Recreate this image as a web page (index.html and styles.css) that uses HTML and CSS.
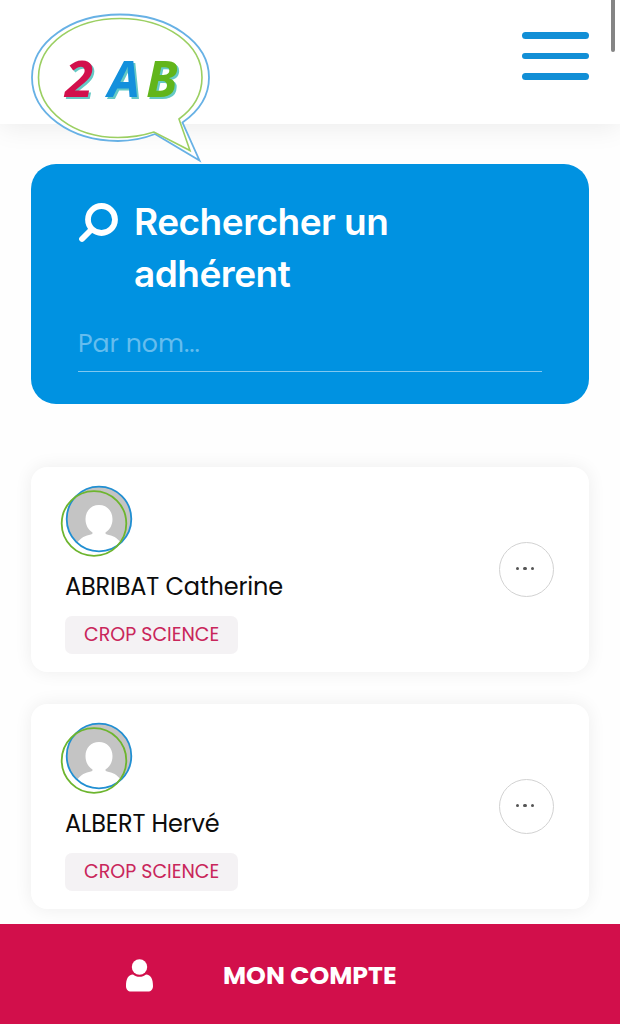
FILE: index.html
```
<!DOCTYPE html>
<html lang="fr">
<head>
  <meta charset="UTF-8">
  <meta name="viewport" content="width=device-width, initial-scale=1.0">
  <title>2 AB - Rechercher un adhérent</title>
  <link rel="stylesheet" href="styles.css">
</head>
<body>
  <header class="header">
    <a class="logo" href="#" aria-label="2 AB">
      <svg width="182" height="152" viewBox="29 11 182 152">
        <path class="bubble-outer" d="M155 134C145 138 132 141 118 141C70 141 32 113 32 77.500C32 42 71 14.500 120 14.500C169 14.500 209 42 209 77.500C209 96 199 111 182.500 122.500L199.500 160.500Z"/>
        <path class="bubble-inner" d="M154 132C143 135.500 131 137.500 118 137.500C74 137.500 38.500 111 38.500 77.500C38.500 44 74 18.500 120 18.500C166 18.500 202 44 202 77.500C202 94 194 108 179 119L190 150.500Z"/>
        <g class="logo-text">
          <text class="red" x="65" y="97">2</text>
          <text class="blue" x="108" y="97">A</text>
          <text class="green" x="146" y="97">B</text>
        </g>
      </svg>
    </a>
    <button class="burger" aria-label="Menu">
      <span></span>
      <span></span>
      <span></span>
    </button>
    <div class="scroll-thumb"></div>
  </header>

  <main class="content">
    <section class="search">
      <div class="search-head">
        <svg class="search-icon" width="41" height="42" viewBox="0 0 41 42">
          <circle cx="23.500" cy="16.500" r="13.500"/>
          <path d="M13.500 26.500L4 36"/>
        </svg>
        <h1>Rechercher un<br>adhérent</h1>
      </div>
      <input class="search-input" type="text" placeholder="Par nom...">
    </section>

    <ul class="members">
      <li class="member">
        <div class="member-info">
          <svg class="avatar" width="74" height="74" viewBox="0 0 74 74">
            <clipPath id="clip1"><circle cx="39" cy="35" r="32.500"/></clipPath>
            <g clip-path="url(#clip1)">
              <rect class="avatar-bg" width="74" height="74"/>
              <path class="avatar-shape" d="M39 21C31 21 25.500 27 25.500 35C25.500 41 28 45.500 32.500 48.500C33 50.500 30 50.500 27 51.500C22 53 17 57 15 64V74H63V64C61 57 56 53 51 51.500C48 50.500 45 50.500 45.500 48.500C50 45.500 52.500 41 52.500 35C52.500 27 47 21 39 21Z"/>
            </g>
            <circle class="ring-blue" cx="39" cy="35" r="32.300"/>
            <circle class="ring-green" cx="34" cy="39.500" r="32.300"/>
          </svg>
          <h2>ABRIBAT Catherine</h2>
          <span class="tag">CROP SCIENCE</span>
        </div>
        <button class="more" aria-label="Plus"><i></i><i></i><i></i></button>
      </li>
      <li class="member">
        <div class="member-info">
          <svg class="avatar" width="74" height="74" viewBox="0 0 74 74">
            <clipPath id="clip2"><circle cx="39" cy="35" r="32.500"/></clipPath>
            <g clip-path="url(#clip2)">
              <rect class="avatar-bg" width="74" height="74"/>
              <path class="avatar-shape" d="M39 21C31 21 25.500 27 25.500 35C25.500 41 28 45.500 32.500 48.500C33 50.500 30 50.500 27 51.500C22 53 17 57 15 64V74H63V64C61 57 56 53 51 51.500C48 50.500 45 50.500 45.500 48.500C50 45.500 52.500 41 52.500 35C52.500 27 47 21 39 21Z"/>
            </g>
            <circle class="ring-blue" cx="39" cy="35" r="32.300"/>
            <circle class="ring-green" cx="34" cy="39.500" r="32.300"/>
          </svg>
          <h2>ALBERT Hervé</h2>
          <span class="tag">CROP SCIENCE</span>
        </div>
        <button class="more" aria-label="Plus"><i></i><i></i><i></i></button>
      </li>
    </ul>
  </main>

  <a class="account" href="#">
    <svg width="27" height="33" viewBox="0 0 27 33">
      <circle cx="13.500" cy="8" r="7.700"/>
      <path d="M7 15.500C9 17 11 17.800 13.500 17.800C16 17.800 18 17 20 15.500C25 16 27 20 27 27C27 30.500 25 32.500 22 32.500H5C2 32.500 0 30.500 0 27C0 20 2 16 7 15.500Z"/>
    </svg>
    <span>MON COMPTE</span>
  </a>
</body>
</html>
```

FILE: styles.css
```
* {
  box-sizing: border-box;
}
body {
  margin: 0;
  height: 1024px;
  overflow: hidden;
  display: flex;
  flex-direction: column;
  background: #fefefe;
  font-family: Poppins, Inter, sans-serif;
}
button {
  padding: 0;
  border: 0;
  background: none;
}

/* header */
.header {
  position: relative;
  z-index: 1;
  flex: none;
  display: flex;
  justify-content: space-between;
  align-items: flex-start;
  height: 124px;
  padding: 11px 31px 0 29px;
  background: #fff;
  box-shadow: 0 3px 26px rgba(0, 0, 0, 0.08);
}
.logo svg {
  display: block;
}
.bubble-outer,
.bubble-inner {
  fill: #fff;
  stroke: #67b1e5;
  stroke-width: 1.8;
}
.bubble-inner {
  stroke: #9bcf62;
  stroke-width: 1.6;
}
.logo-text {
  font: italic 700 51px "Open Sans", sans-serif;
  filter: drop-shadow(2px 2px 0 #65c9c5);
}
.red {
  fill: #d2104c;
}
.blue {
  fill: #1390dc;
}
.green {
  fill: #62b51b;
}
.burger {
  display: flex;
  flex-direction: column;
  gap: 14px;
  margin-top: 21px;
}
.burger span {
  width: 67px;
  height: 6.500px;
  border-radius: 4px;
  background: #128fd6;
}
.scroll-thumb {
  position: absolute;
  top: 0;
  right: 5px;
  width: 4px;
  height: 52px;
  border-radius: 0 0 3px 3px;
  background: #858585;
}

/* search */
.content {
  flex: 1;
  min-height: 0;
  padding: 40px 31px 0;
}
.search {
  height: 240px;
  padding: 32px 47px 0;
  border-radius: 25px;
  background: #0092e1;
}
.search-head {
  display: flex;
  gap: 15px;
}
.search-icon {
  flex: none;
  margin-top: 7px;
  fill: none;
  stroke: #fff;
  stroke-width: 5.800;
  stroke-linecap: round;
}
.search h1 {
  margin: 0;
  color: #fff;
  font: 600 37px/52px Inter, sans-serif;
  letter-spacing: -0.5px;
}
.search-input {
  display: block;
  width: 464px;
  height: 56px;
  margin-top: 16px;
  padding: 0;
  border: 0;
  border-bottom: 1px solid #80c8f0;
  background: none;
  font: 400 25.200px Poppins, Inter, sans-serif;
}
.search-input::placeholder {
  color: #65bdee;
  opacity: 1;
}

/* members */
.members {
  display: flex;
  flex-direction: column;
  gap: 32px;
  margin: 63px 0 0;
  padding: 0;
  list-style: none;
}
.member {
  display: flex;
  justify-content: space-between;
  align-items: center;
  height: 205px;
  padding: 0 35px 0 34px;
  border-radius: 16px;
  background: #fff;
  box-shadow: 0 0 18px rgba(0, 0, 0, 0.07);
}
.member-info {
  display: flex;
  flex-direction: column;
  align-items: flex-start;
  padding-bottom: 1px;
}
.avatar {
  margin: -1px 0 0 -5px;
}
.avatar-bg {
  fill: #c4c4c4;
}
.avatar-shape {
  fill: #fff;
}
.ring-blue,
.ring-green {
  fill: none;
  stroke: #218fd2;
  stroke-width: 1.8;
}
.ring-green {
  stroke: #6db52e;
}
.member h2 {
  margin: 11px 0;
  color: #0c0c0c;
  font-weight: 400;
  font-size: 24px;
  line-height: 36px;
  letter-spacing: -0.150px;
}
.tag {
  padding: 0 19px;
  border-radius: 7px;
  background: #f4f2f4;
  color: #c9265b;
  font-size: 19px;
  line-height: 38px;
}
.more {
  display: flex;
  justify-content: center;
  align-items: center;
  gap: 4px;
  width: 55px;
  height: 55px;
  padding: 0 3px 2px 0;
  border: 1px solid #d2d2d2;
  border-radius: 50%;
}
.more i {
  width: 3.600px;
  height: 3.600px;
  border-radius: 50%;
  background: #555;
}

/* bottom bar */
.account {
  position: relative;
  z-index: 1;
  flex: none;
  display: flex;
  align-items: center;
  gap: 70px;
  height: 100px;
  padding: 3px 0 0 126px;
  background: #d20f4b;
  color: #fff;
  font-weight: 700;
  font-size: 25.200px;
  text-decoration: none;
}
.account svg {
  fill: #fff;
}
```
